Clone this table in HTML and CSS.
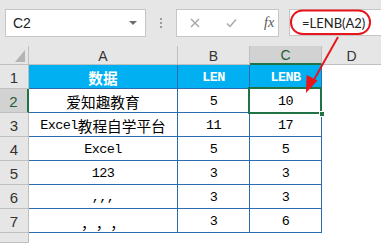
FILE: index.html
```html
<!DOCTYPE html>
<html>
<head>
<meta charset="utf-8">
<link rel="stylesheet" href="styles.css">
</head>
<body>
<div class="app">
  <div class="fbar">
    <div class="namebox"><span class="nb-text">C2</span><span class="dd"></span></div>
    <div class="grip"><i></i><i></i><i></i></div>
    <div class="btns">
      <svg class="ico x" width="10" height="10" viewBox="0 0 10 10"><path d="M1 1L9 9M9 1L1 9" stroke="#a6a6a6" stroke-width="1.4" fill="none"/></svg>
      <svg class="ico ok" width="11" height="10" viewBox="0 0 11 10"><path d="M1 5.5L4 8.5L10 1.5" stroke="#a6a6a6" stroke-width="1.4" fill="none"/></svg>
      <span class="fx">fx</span>
    </div>
    <div class="formula">=LENB(A2)</div>
  </div>
  <div class="grid">
    <div class="corner"><span class="tri"></span></div>
    <div class="ch">A</div>
    <div class="ch">B</div>
    <div class="ch sel">C</div>
    <div class="ch last">D</div>

    <div class="rh">1</div>
    <div class="c hd">数据</div>
    <div class="c hd m">LEN</div>
    <div class="c hd m">LENB</div>
    <div class="d"></div>

    <div class="rh sel">2</div>
    <div class="c">爱知趣教育</div>
    <div class="c m">5</div>
    <div class="c m active">10<span class="handle"></span></div>
    <div class="d"></div>

    <div class="rh">3</div>
    <div class="c"><span class="m">Excel</span>教程自学平台</div>
    <div class="c m">11</div>
    <div class="c m">17</div>
    <div class="d"></div>

    <div class="rh">4</div>
    <div class="c m">Excel</div>
    <div class="c m">5</div>
    <div class="c m">5</div>
    <div class="d"></div>

    <div class="rh">5</div>
    <div class="c m">123</div>
    <div class="c m">3</div>
    <div class="c m">3</div>
    <div class="d"></div>

    <div class="rh">6</div>
    <div class="c m">,,,</div>
    <div class="c m">3</div>
    <div class="c m">3</div>
    <div class="d"></div>

    <div class="rh">7</div>
    <div class="c fw">，，，</div>
    <div class="c m">3</div>
    <div class="c m">6</div>
    <div class="d"></div>

    <div class="rh"></div>
    <div class="e"></div>
    <div class="e"></div>
    <div class="e"></div>
    <div class="d"></div>
  </div>
  <svg class="overlay" width="381" height="243" viewBox="0 0 381 243">
    <rect x="291" y="10.5" width="79" height="23.5" rx="11.5" ry="11.5" fill="none" stroke="#e8151b" stroke-width="2"/>
    <line x1="338" y1="37" x2="311" y2="85" stroke="#e8151b" stroke-width="2"/>
    <polygon points="306,93 317.5,80.5 306.5,75" fill="#e8151b"/>
  </svg>
</div>
</body>
</html>
```
FILE: styles.css
```css
html, body {
  margin: 0;
  padding: 0;
}
body {
  width: 381px;
  height: 243px;
  overflow: hidden;
  background: #e6e6e6;
}
.app {
  position: relative;
  width: 381px;
  height: 243px;
  overflow: hidden;
}
.fbar {
  height: 46px;
  box-sizing: border-box;
  padding: 9px 0 0 5px;
  display: flex;
  align-items: flex-start;
  background: #e6e6e6;
}
.namebox {
  width: 141px;
  height: 28px;
  box-sizing: border-box;
  border: 1px solid #c6c6c6;
  background: #fff;
  display: flex;
  align-items: center;
  justify-content: space-between;
  padding: 0 8px 0 7px;
  font-family: "Liberation Sans", Arial, sans-serif;
  font-size: 14px;
  color: #222;
}
.dd {
  width: 0;
  height: 0;
  border-left: 4px solid transparent;
  border-right: 4px solid transparent;
  border-top: 4px solid #6e6e6e;
}
.grip {
  width: 30px;
  height: 28px;
  display: flex;
  flex-direction: column;
  align-items: center;
  justify-content: center;
  gap: 2px;
}
.grip i {
  display: block;
  width: 2px;
  height: 2px;
  background: #9a9a9a;
}
.btns {
  width: 103px;
  height: 28px;
  box-sizing: border-box;
  border: 1px solid #c6c6c6;
  background: #fff;
  display: flex;
  align-items: center;
  padding-left: 13px;
}
.ico.ok {
  margin-left: 26px;
}
.fx {
  margin-left: 27px;
  font-family: "Liberation Serif", serif;
  font-style: italic;
  font-size: 14px;
  color: #555;
}
.formula {
  flex: 1;
  margin-left: 10px;
  margin-right: -5px;
  height: 27px;
  box-sizing: border-box;
  border: 1px solid #c6c6c6;
  background: #fff;
  display: flex;
  align-items: center;
  padding-left: 12px;
  font-family: Lato, "Liberation Sans", sans-serif;
  font-size: 13px;
  color: #222;
}
.grid {
  display: grid;
  grid-template-columns: 29px 149px 72px 72px 1fr;
  grid-template-rows: 19px repeat(7, 24px) 1fr;
  height: 197px;
  background: #fff;
}
.grid > div {
  box-sizing: border-box;
}
.corner {
  background: #e6e6e6;
  border-right: 1px solid #bfbfbf;
  border-bottom: 1px solid #bfbfbf;
  display: flex;
  align-items: flex-end;
  justify-content: flex-end;
  padding: 0 3px 2px 0;
}
.tri {
  width: 0;
  height: 0;
  border-left: 10px solid transparent;
  border-bottom: 12px solid #b4b4b4;
}
.ch {
  background: #e6e6e6;
  border-right: 1px solid #bfbfbf;
  border-bottom: 1px solid #bfbfbf;
  display: flex;
  align-items: center;
  justify-content: center;
  font-family: "Liberation Sans", Arial, sans-serif;
  font-size: 14px;
  color: #333;
  padding-top: 1px;
}
.ch.last {
  border-right: none;
}
.ch.sel {
  background: #d2d2d2;
  border-bottom: 2px solid #217346;
  color: #1f5e3a;
}
.rh {
  background: #e6e6e6;
  border-right: 1px solid #bfbfbf;
  border-bottom: 1px solid #bfbfbf;
  display: flex;
  align-items: center;
  justify-content: center;
  font-family: "Liberation Sans", Arial, sans-serif;
  font-size: 15px;
  color: #333;
  padding-top: 2px;
}
.rh.sel {
  background: #d2d2d2;
  border-right: 2px solid #217346;
  color: #1f5e3a;
}
.c {
  position: relative;
  border-right: 1px solid #2b6cb0;
  border-bottom: 1px solid #2b6cb0;
  display: flex;
  align-items: center;
  justify-content: center;
  padding-top: 2px;
  font-family: "Noto Sans CJK SC", sans-serif;
  font-size: 14.67px;
  color: #000;
  white-space: nowrap;
}
.m {
  font-family: "Liberation Mono", monospace;
  font-size: 13.5px;
  letter-spacing: -0.6px;
}
.c.fw {
  font-family: "Noto Sans CJK SC", sans-serif;
  font-size: 14.67px;
  letter-spacing: 0;
  padding-top: 4px;
  text-spacing-trim: space-all;
  font-feature-settings: "halt" 0, "chws" 0, "palt" 0;
}
.c.hd {
  background: #00b0f0;
  color: #fff;
  font-weight: bold;
}
.e {
  background: #fff;
}
.d {
  background: #fff;
}
.active::after {
  content: "";
  position: absolute;
  left: -2px;
  top: -2px;
  right: -1px;
  bottom: -2px;
  border: 2px solid #217346;
}
.handle {
  position: absolute;
  right: -4px;
  bottom: -5px;
  width: 6px;
  height: 6px;
  background: #217346;
  border: 1px solid #fff;
  box-sizing: border-box;
  z-index: 2;
}
.overlay {
  position: absolute;
  left: 0;
  top: 0;
  pointer-events: none;
}
```
